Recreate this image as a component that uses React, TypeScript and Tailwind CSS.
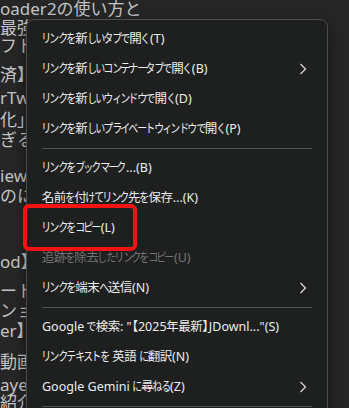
import React from 'react';

type MenuEntry =
  | { kind: 'item'; label: string; sub?: boolean; disabled?: boolean }
  | { kind: 'sep' };

const entries: MenuEntry[] = [
  { kind: 'item', label: 'リンクを新しいタブで開く(T)' },
  { kind: 'item', label: 'リンクを新しいコンテナータブで開く(B)', sub: true },
  { kind: 'item', label: 'リンクを新しいウィンドウで開く(D)' },
  { kind: 'item', label: 'リンクを新しいプライベートウィンドウで開く(P)' },
  { kind: 'sep' },
  { kind: 'item', label: 'リンクをブックマーク...(B)' },
  { kind: 'item', label: '名前を付けてリンク先を保存...(K)' },
  { kind: 'item', label: 'リンクをコピー(L)' },
  { kind: 'item', label: '追跡を除去したリンクをコピー(U)', disabled: true },
  { kind: 'item', label: 'リンクを端末へ送信(N)', sub: true },
  { kind: 'sep' },
  { kind: 'item', label: 'Google で検索: "【2025年最新】JDownl..."(S)' },
  { kind: 'item', label: 'リンクテキストを 英語 に翻訳(N)' },
  { kind: 'item', label: 'Google Gemini に尋ねる(Z)', sub: true },
  { kind: 'sep' },
  { kind: 'item', label: '調査(Q)' },
];

// the original UI font has narrow kana; give every kana a slim box and squeeze it
const Label = ({ text }: { text: string }) => (
  <span className="whitespace-nowrap">
    {Array.from(text.normalize('NFC')).map((ch, i) => {
      if (/[\u3041-\u30fa\u30fc]/.test(ch)) {
        return (
          <span key={i} className="inline-flex w-[8.4px] justify-center">
            <span className="inline-block scale-x-[0.8]">{ch}</span>
          </span>
        );
      }
      if (/[\u4e00-\u9fff]/.test(ch)) {
        return (
          <span key={i} className="inline-flex w-[12px] justify-center">
            {ch}
          </span>
        );
      }
      if (/[\u0300-\u036f\u3099\u309a]/.test(ch)) return null;
      return (
        <span key={i} className='[font-feature-settings:"palt"]'>
          {ch}
        </span>
      );
    })}
  </span>
);

const Chevron = () => (
  <svg width="8" height="12" viewBox="0 0 8 12" className="mr-[5px] shrink-0">
    <polyline
      points="1.5,1 6.5,6 1.5,11"
      fill="none"
      stroke="#d6d6d6"
      strokeWidth="1.3"
    />
  </svg>
);

const PageText = () => (
  <div className="flex flex-col whitespace-nowrap text-[17px] leading-[20px] text-[#c4c4c4]">
    <div className="-mt-[1px]">oader2の使い方と</div>
    <div className="-mt-[1px]">最強のダウンロードソフト</div>
    <div className="-mt-[2px]">フトを紹介</div>
    <div className="mt-[9px]">済】ファイル</div>
    <div className="mt-[3px]">rTwitter</div>
    <div className="mt-[2px]">化」とは</div>
    <div className="mt-[0px]">ぎるアプリ</div>
    <div className="mt-[16px]">iewer</div>
    <div>のに</div>
    <div className="mt-[46px]">od】の使い方</div>
    <div className="mt-[9px]">ートする</div>
    <div>ンョン</div>
    <div>er】ダウンロード</div>
    <div className="mt-[11px]">動画を</div>
    <div className="mt-[3px]">ayer</div>
    <div className="-mt-[2px]">紹介</div>
  </div>
);

const ContextMenu = () => (
  <div className="absolute left-[26px] top-[19px] w-[302px] rounded-[8px] border border-[#4b4c4c] bg-[#1e1f1f] p-[4px] shadow-[0_4px_14px_rgba(0,0,0,0.45)]">
    {entries.map((e, i) =>
      e.kind === 'sep' ? (
        <div key={i} className="mx-[11px] my-[4px] h-px bg-[#4f5050]" />
      ) : (
        <div
          key={i}
          className={
            'flex h-[30px] items-center justify-between px-[11px] text-[12.5px] ' +
            (e.disabled ? 'text-[#737474]' : 'text-[#ededed]')
          }
        >
          <Label text={e.label} />
          {e.sub && <Chevron />}
        </div>
      )
    )}
  </div>
);

export default function App() {
  return (
    <div className="relative h-[408px] w-[349px] overflow-hidden bg-[#262626] font-['Noto_Sans','Noto_Sans_CJK_JP',sans-serif]">
      <PageText />
      <ContextMenu />
      {/* highlight around "copy link" */}
      <div className="absolute left-[23px] top-[204px] h-[47px] w-[114px] rounded-[6px] border-[4px] border-[#f41414]" />
    </div>
  );
}
